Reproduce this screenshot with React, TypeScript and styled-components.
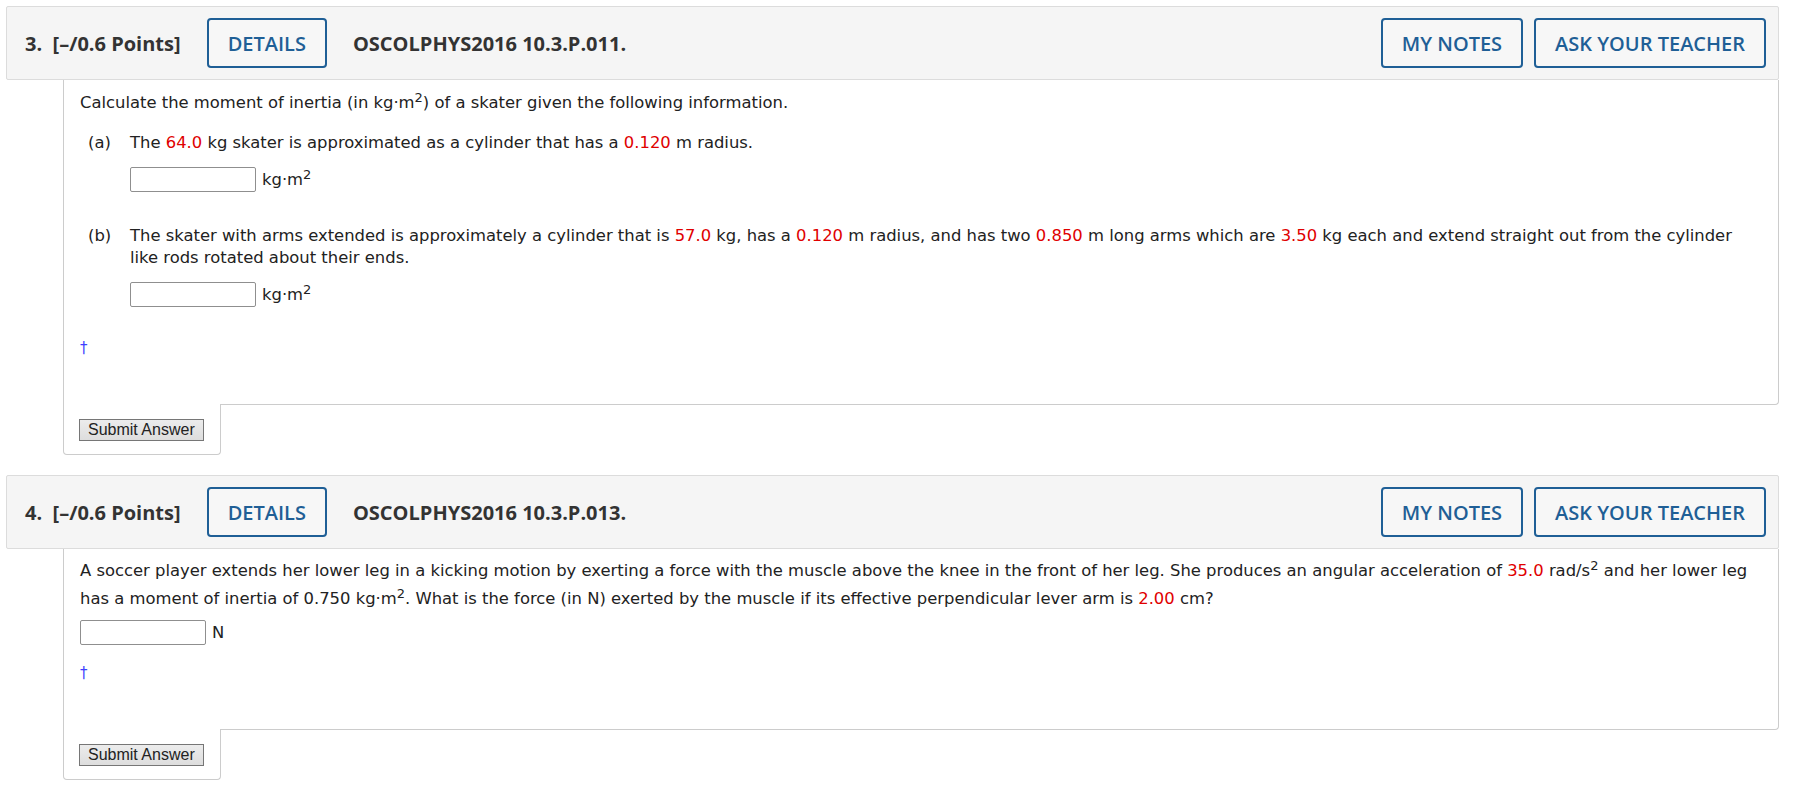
import styled, { createGlobalStyle } from "styled-components";

const GlobalStyle = createGlobalStyle`
  body {
    margin: 0;
    background: #ffffff;
  }
`;

const Page = styled.div`
  padding: 6px 18px 20px 6px;
  display: flex;
  flex-direction: column;
  gap: 20px;
`;

const Question = styled.section`
  display: flex;
  flex-direction: column;
`;

const Header = styled.div`
  box-sizing: border-box;
  height: 74px;
  display: flex;
  align-items: center;
  padding: 0 12px 0 18px;
  background: #f5f5f5;
  border: 1px solid #dcdcdc;
  border-radius: 2px;
  font-family: "Open Sans", "Noto Sans", sans-serif;
  color: #333333;
`;

const Points = styled.div`
  font-size: 20px;
  font-weight: 700;
  margin-right: 26px;
  white-space: pre;
`;

const Code = styled.div`
  font-size: 20px;
  font-weight: 700;
  margin-left: 26px;
  flex: 1;
`;

const HeaderButton = styled.button`
  box-sizing: border-box;
  height: 50px;
  padding: 0 19px;
  background: #f7f7f7;
  border: 2px solid #1f5f96;
  border-radius: 4px;
  color: #1f5f96;
  font-family: "Open Sans", "Noto Sans", sans-serif;
  font-size: 20px;
  font-weight: 600;
  & + & {
    margin-left: 11px;
  }
`;

const Body = styled.div<{ $top: number }>`
  margin-left: 57px;
  border: 1px solid #cccccc;
  border-top: none;
  border-radius: 0 0 4px 0;
  padding: ${(p) => p.$top}px 30px 45px 16px;
  font-family: "DejaVu Sans", Verdana, sans-serif;
  font-size: 16.4px;
  line-height: 22px;
  color: #222222;
`;

const Para = styled.p<{ $lh?: number }>`
  margin: 0;
  line-height: ${(p) => p.$lh ?? 22}px;
`;

const Part = styled.div`
  display: grid;
  grid-template-columns: 42px 1fr;
  margin-left: 8px;
  margin-top: 18px;
  & + & {
    margin-top: 33px;
  }
`;

const PartLabel = styled.span``;

const AnswerRow = styled.div<{ $top: number }>`
  display: flex;
  align-items: center;
  gap: 6px;
  margin-top: ${(p) => p.$top}px;
`;

const AnswerInput = styled.input`
  box-sizing: border-box;
  width: 126px;
  height: 25px;
  border: 1px solid #8f8f8f;
  border-radius: 2px;
  background: #ffffff;
`;

const Unit = styled.span`
  line-height: 18px;
`;

const Num = styled.span`
  color: #e00000;
`;

const Sup = styled.sup`
  font-size: 13px;
  line-height: 0;
`;

const Dagger = styled.div<{ $top: number }>`
  margin-top: ${(p) => p.$top}px;
  color: #3f3fff;
  font-size: 15px;
`;

const SubmitTab = styled.div`
  box-sizing: border-box;
  margin-left: 57px;
  margin-top: -1px;
  width: 158px;
  height: 51px;
  padding: 15px 0 0 15px;
  background: #ffffff;
  border: 1px solid #cccccc;
  border-top: none;
  border-radius: 0 0 4px 4px;
`;

const SubmitButton = styled.button`
  box-sizing: border-box;
  height: 22px;
  padding: 0 8px;
  border: 1px solid #767676;
  border-radius: 0;
  background: linear-gradient(#ececec, #dddddd);
  font-family: "Liberation Sans", Arial, sans-serif;
  font-size: 16px;
  line-height: 18px;
  color: #222222;
`;

const KgM2 = () => (
  <>
    kg·m<Sup>2</Sup>
  </>
);

const QuestionHeader = ({ num, code }: { num: number; code: string }) => (
  <Header>
    <Points>{`${num}.  [–/0.6 Points]`}</Points>
    <HeaderButton>DETAILS</HeaderButton>
    <Code>{code}</Code>
    <HeaderButton>MY NOTES</HeaderButton>
    <HeaderButton>ASK YOUR TEACHER</HeaderButton>
  </Header>
);

const App = () => {
  return (
    <>
      <GlobalStyle />
      <Page>
        <Question>
          <QuestionHeader num={3} code="OSCOLPHYS2016 10.3.P.011." />
          <Body $top={12}>
            <Para>
              Calculate the moment of inertia (in <KgM2 />) of a skater given the following
              information.
            </Para>
            <Part>
              <PartLabel>(a)</PartLabel>
              <div>
                <Para>
                  The <Num>64.0</Num> kg skater is approximated as a cylinder that has a{" "}
                  <Num>0.120</Num> m radius.
                </Para>
                <AnswerRow $top={13}>
                  <AnswerInput />
                  <Unit>
                    <KgM2 />
                  </Unit>
                </AnswerRow>
              </div>
            </Part>
            <Part>
              <PartLabel>(b)</PartLabel>
              <div>
                <Para>
                  The skater with arms extended is approximately a cylinder that is{" "}
                  <Num>57.0</Num> kg, has a <Num>0.120</Num> m radius, and has two{" "}
                  <Num>0.850</Num> m long arms which are <Num>3.50</Num> kg each and extend
                  straight out from the cylinder like rods rotated about their ends.
                </Para>
                <AnswerRow $top={13}>
                  <AnswerInput />
                  <Unit>
                    <KgM2 />
                  </Unit>
                </AnswerRow>
              </div>
            </Part>
            <Dagger $top={30}>†</Dagger>
          </Body>
          <SubmitTab>
            <SubmitButton>Submit Answer</SubmitButton>
          </SubmitTab>
        </Question>

        <Question>
          <QuestionHeader num={4} code="OSCOLPHYS2016 10.3.P.013." />
          <Body $top={8}>
            <Para $lh={28}>
              A soccer player extends her lower leg in a kicking motion by exerting a force with
              the muscle above the knee in the front of her leg. She produces an angular
              acceleration of <Num>35.0</Num> rad/s<Sup>2</Sup> and her lower leg has a moment of
              inertia of 0.750 <KgM2 />. What is the force (in N) exerted by the muscle if its
              effective perpendicular lever arm is <Num>2.00</Num> cm?
            </Para>
            <AnswerRow $top={7}>
              <AnswerInput />
              <Unit>N</Unit>
            </AnswerRow>
            <Dagger $top={17}>†</Dagger>
          </Body>
          <SubmitTab>
            <SubmitButton>Submit Answer</SubmitButton>
          </SubmitTab>
        </Question>
      </Page>
    </>
  );
};

export default App;
